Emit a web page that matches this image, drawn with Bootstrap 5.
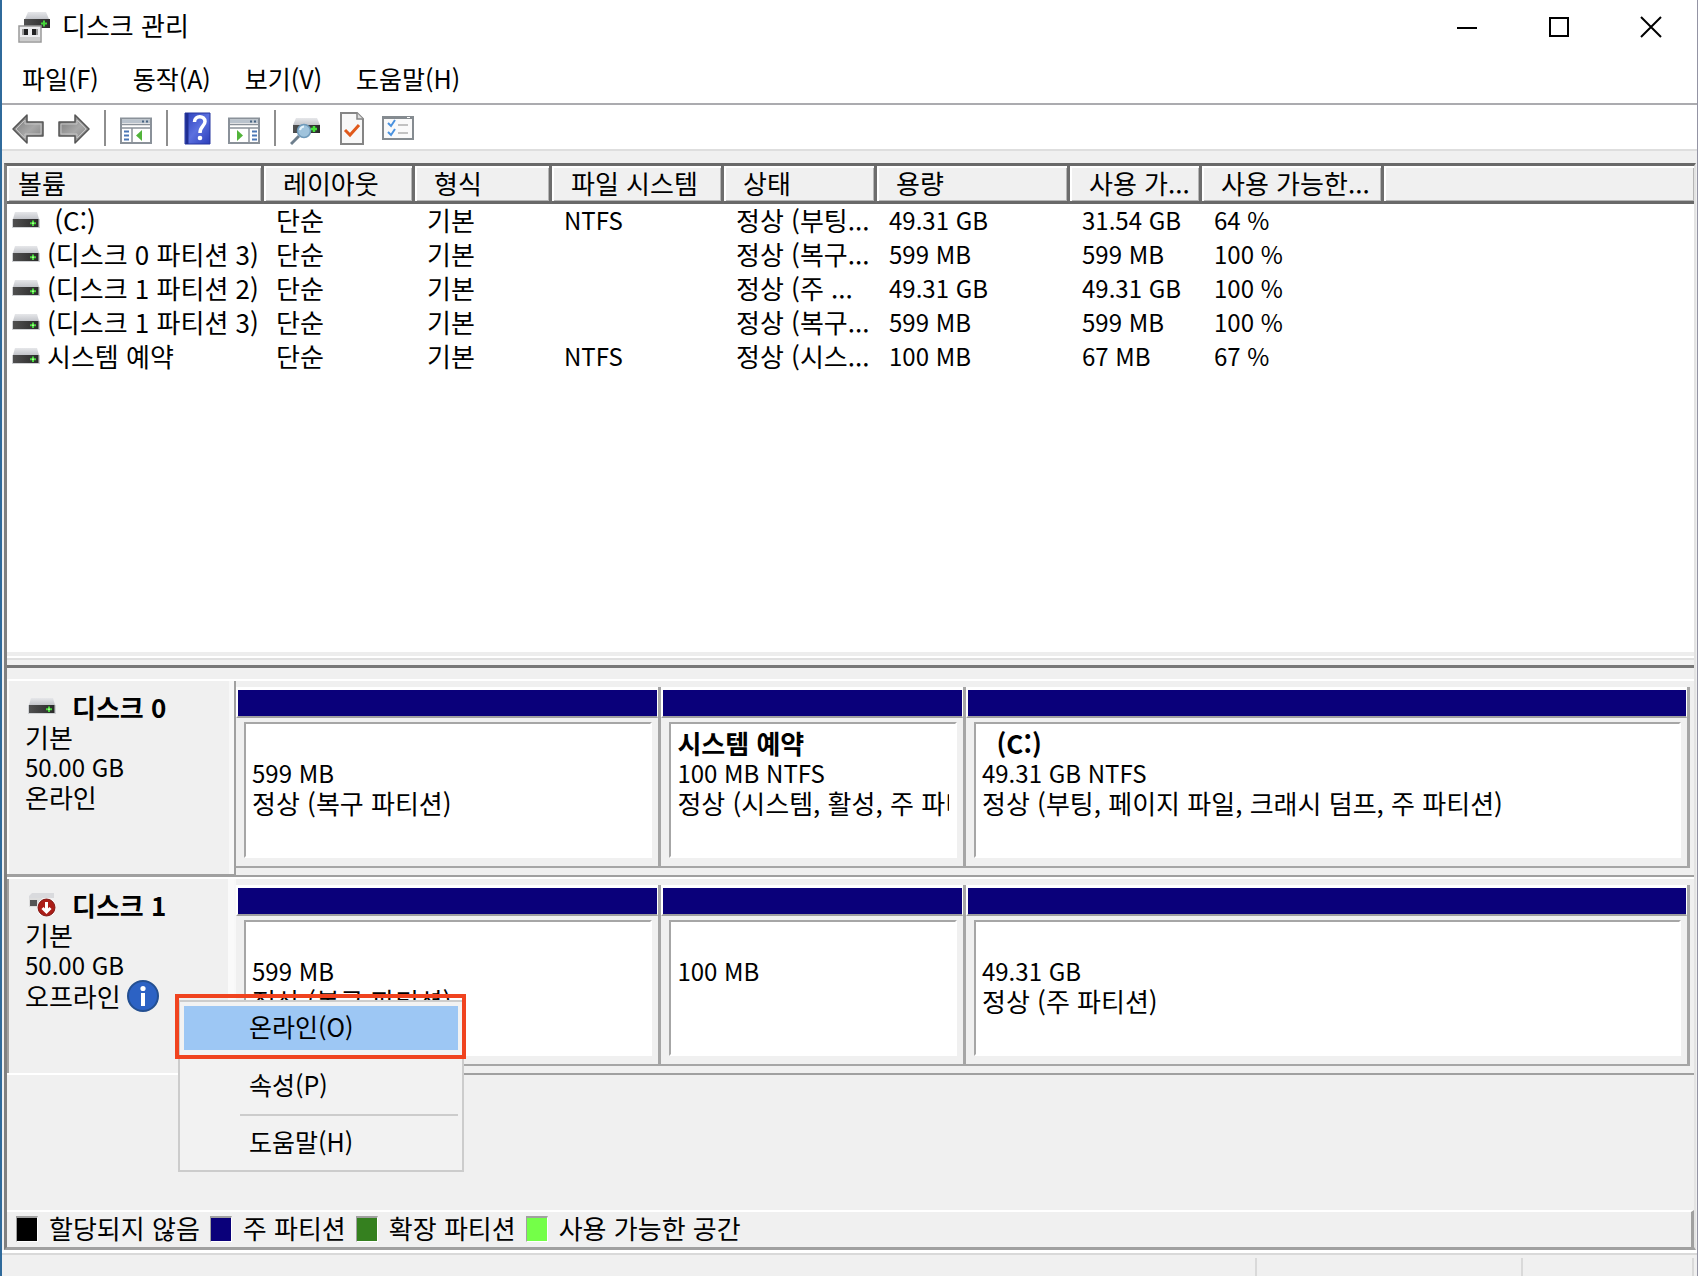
<!DOCTYPE html>
<html lang="ko">
<head>
<meta charset="utf-8">
<meta name="viewport" content="width=device-width, initial-scale=1">
<title>디스크 관리</title>
<link href="https://cdn.jsdelivr.net/npm/bootstrap@5.3.0/dist/css/bootstrap.min.css" rel="stylesheet">
<style>
body{font-family:"Noto Sans CJK KR",sans-serif;font-size:26px;line-height:30px;color:#000;background:#f0f0f0}
button{font-family:inherit;color:inherit}
.win{border-left:2px solid #2f6a9b;border-right:1px solid #9494a4}
.plain{border:0;background:transparent;padding:0;line-height:0}
.titlebar{height:53px}
.titlebar h1{font-size:26px;line-height:30px;font-weight:400;padding:0 0 4px 12px}
.winbtn{width:92px;height:53px}
.menubar{height:50px;gap:34px;padding-left:20px;border-bottom:2px solid #ababaf;box-sizing:content-box}
.menubar a{color:#000;font-size:25px;text-decoration:none}
.toolbar{height:44px;gap:14px;padding:2px 0 0 10px;border-bottom:2px solid #dedede}
.toolbar{box-sizing:border-box;height:46px}
.sep{width:2px;height:36px;background:#8e8e8e}
.frame{margin:12px 1px 0 2px;border:3px solid #808080;border-top-color:#696969;border-right:2px solid #e3e3e3;border-bottom-color:#a0a0a0}
.listpane{flex:491 1 0;background:#fff}
.vols{table-layout:fixed;width:100%;border-collapse:separate;border-spacing:0}
.vols th{height:38px;padding:0 0 2px 19px;font-weight:400;font-size:26px;background:#f0f0f0;border-right:3px solid #6d6d6d;border-bottom:3px solid #696969;box-shadow:inset 2px 2px #fff,inset -1px -1px #b5b5b5}
.vols th:first-child{padding-left:11px}
.vols th:last-child{border-right:0}
.vols td{height:34px;padding:0 0 2px 12px;line-height:32px}
.vols td:first-child{padding-left:5px}
.vols th,.vols td{white-space:nowrap}
.vols td svg{margin:0 7px 5px 0}
.fig{font-size:24px}
.c1{width:257px}.c2{width:151px}.c3{width:137px}.c4{width:172px}.c5{width:153px}.c6{width:193px}.c7{width:132px}.c8{width:182px}
.splitter{height:16px;background:#f0f0f0;border-top:4px solid #ededed;border-bottom:3px solid #777;box-shadow:inset 0 2px #fff,inset 0 4px #e0e0e0}
.graph{flex:537 1 0;padding-top:11px}
.disk{height:198px;border-top:2px solid #fff}
.disk-label{width:229px;padding:11px 6px 0 18px;border-right:2px solid #a0a0a0;border-bottom:3px solid #a0a0a0;box-shadow:inset -5px 0 #f8f8f8,inset 2px 0 #fbfbfb}
.disk-label strong{line-height:32px}
.disk-label.picked{border-right-color:#f8f8f8;border-bottom:2px solid #fff;box-shadow:inset 2px 0 #a0a0a0,inset -6px 0 #fafafa}
.name-row{padding-left:3px;gap:16px;height:30px}
.parts{display:grid;grid-template-columns:426fr 305fr 725fr;border-bottom:2px solid #a0a0a0;padding:6px 4px 7px 0}
.part{border-right:3px solid #a6a6a6;border-bottom:2px solid #a6a6a6;min-width:0}
.stripe{height:31px;background:#0a007a;border:solid #fff;border-width:3px 1px 0 2px;border-bottom:2px solid #a0a0a0}
.part-body{margin:4px 6px 6px 8px;padding:4px 6px 0 6px;height:136px;background:#fff;border:2px solid #fff;border-top-color:#a6a6a6;border-left-color:#a6a6a6}
.part-body div{height:30px;white-space:nowrap}
.part-body .clipped{overflow:hidden}
.ctx{left:171px;top:121px;width:286px;height:172px;background:#f2f2f2;border:2px solid #ccc;padding:4px;z-index:5}
.ctx .dropdown-item{font-size:25px;line-height:30px;padding:5px 0 9px 65px;color:#000}
.ctx .dropdown-item.hot{background:#9dc7f4}
.ctx .dropdown-item + .dropdown-item{margin-top:14px}
.ctx hr{margin:6px 0 5px 56px;border-top:2px solid #ccc;opacity:1}
.callout-box{left:168px;top:115px;width:291px;height:65px;border:4px solid #f0431f;z-index:6;pointer-events:none}
.legend-bar{height:37px;border-top:2px solid #fff;border-right:3px solid #a0a0a0;padding:0 0 3px 9px;gap:10px}
.swatch{width:22px;height:26px;border:1px solid #fff;border-top:2px solid #a0a0a0;border-left:1px solid #a0a0a0;margin:2px 11px 0 0}
.status{height:26px;border-top:3px solid #fff;box-shadow:inset 0 2px #d9d9d9;padding-top:5px}
.status div{border-right:2px solid #d9d9d9}
.s2{width:266px}.s3{width:171px;margin-right:3px}
</style>
</head>
<body>
<svg width="0" height="0" class="position-absolute" aria-hidden="true">
<defs>
<linearGradient id="top" x2="0" y2="1"><stop stop-color="#e6e7ea"/><stop offset="1" stop-color="#c3c5ca"/></linearGradient>
<linearGradient id="face" x2="1" y2="0"><stop stop-color="#505050"/><stop offset="1" stop-color="#2a2a2a"/></linearGradient>
<linearGradient id="arr" x2="1" y2="1"><stop stop-color="#747474"/><stop offset=".55" stop-color="#a8a8a8"/><stop offset="1" stop-color="#7c7c7c"/></linearGradient>
<linearGradient id="book" x2="1" y2="1"><stop stop-color="#2c3fbb"/><stop offset=".5" stop-color="#5b70df"/><stop offset="1" stop-color="#2c3fbb"/></linearGradient>
<symbol id="drive" viewBox="0 0 28 18"><path d="M3 0H25L27 7H1Z" fill="url(#top)"/><path d="M0 7H28V16H0Z" fill="#cfd1d4"/><path d="M1 7H26.500V15H1Z" fill="url(#face)"/><path d="M21 8.500V14M18 11.200H24" stroke="#45d63a" stroke-width="2"/><circle cx="21" cy="11.200" r="1" fill="#b9ff9e"/></symbol>
<symbol id="pane" viewBox="0 0 32 36"><path d="M1 8.500H31V33H1Z" fill="#fff" stroke="#8a9199" stroke-width="2"/><path d="M2 9.500H30V13H2Z" fill="#b9c2cc"/><path d="M2 14.500H30M2 18H30" stroke="#8a9199" stroke-width="1.500"/><path d="M22 11.500H24M26 11.500H28" stroke="#496482" stroke-width="2"/></symbol>
</defs>
</svg>
<div class="win min-vh-100 d-flex flex-column">
<header class="bg-white">
  <div class="titlebar d-flex align-items-center">
    <svg class="ms-3" width="32" height="32" viewBox="0 0 32 32" aria-hidden="true"><path d="M10 1H28L31 8H7Z" fill="url(#top)"/><path d="M6 8H32V17H6Z" fill="url(#face)"/><path d="M26 9.500V15.500M23 12.500H29" stroke="#45d63a" stroke-width="2"/><path d="M1 15H23V31H1Z" fill="#ececee" stroke="#999" stroke-width="1.500"/><path d="M2 26H22V30H2Z" fill="#ccc"/><path d="M4 18H10V24H4ZM14 18H20V24H14Z" fill="#222"/><path d="M4 18H6V24H4ZM18 18H20V24H18Z" fill="#999"/></svg>
    <h1 class="mb-0 flex-grow-1">디스크 관리</h1>
    <button class="plain winbtn" aria-label="최소화"><svg width="22" height="22" viewBox="0 0 22 22"><path d="M1 12H21" stroke="#000" stroke-width="2"/></svg></button>
    <button class="plain winbtn" aria-label="최대화"><svg width="22" height="22" viewBox="0 0 22 22"><path d="M2 2H20V20H2Z" fill="none" stroke="#000" stroke-width="2"/></svg></button>
    <button class="plain winbtn" aria-label="닫기"><svg width="22" height="22" viewBox="0 0 22 22"><path d="M1 1L21 21M21 1L1 21" stroke="#000" stroke-width="2"/></svg></button>
  </div>
  <nav class="menubar d-flex align-items-center"><a href="#">파일(F)</a><a href="#">동작(A)</a><a href="#">보기(V)</a><a href="#">도움말(H)</a></nav>
  <div class="toolbar d-flex align-items-center" role="toolbar" aria-label="도구">
    <button class="plain" aria-label="뒤로"><svg width="32" height="36" viewBox="0 0 32 36"><path d="M1 19L15 5V12H31V26H15V33Z" fill="url(#arr)" stroke="#555" stroke-width="1.500" stroke-linejoin="round"/><path d="M4 19L13 10V14H29V24H13V28Z" fill="none" stroke="#c4c4c4"/></svg></button>
    <button class="plain" aria-label="앞으로"><svg width="32" height="36" viewBox="0 0 32 36"><path d="M31 19L17 5V12H1V26H17V33Z" fill="url(#arr)" stroke="#555" stroke-width="1.500" stroke-linejoin="round"/><path d="M28 19L19 10V14H3V24H19V28Z" fill="none" stroke="#c4c4c4"/></svg></button>
    <span class="sep"></span>
    <button class="plain" aria-label="콘솔 트리"><svg width="32" height="36"><use href="#pane"/><path d="M12 18V32" stroke="#8a9199" stroke-width="1.500"/><path d="M4 21.500H9M4 25.500H9M4 29.500H9" stroke="#4a76b5" stroke-width="2"/><path d="M22 20V31L16 25.500Z" fill="#52b43a"/></svg></button>
    <span class="sep"></span>
    <button class="plain" aria-label="도움말"><svg width="32" height="36" viewBox="0 0 32 36"><path d="M3 3H28V34H3Z" fill="url(#book)" stroke="#2636a0"/><path d="M5 3V34" stroke="#1f2e93" stroke-width="3"/><path d="M12.500 12C12.500 5 23 5 23 11.500C23 16 18 16 18 23" fill="none" stroke="#fff" stroke-width="3.500"/><circle cx="18" cy="28" r="2.300" fill="#fff"/></svg></button>
    <button class="plain" aria-label="작업 창"><svg width="32" height="36"><use href="#pane"/><path d="M21 18V32" stroke="#8a9199" stroke-width="1.500"/><path d="M24 21.500H29M24 25.500H29M24 29.500H29" stroke="#4a76b5" stroke-width="2"/><path d="M9 20V31L15 25.500Z" fill="#52b43a"/></svg></button>
    <span class="sep"></span>
    <button class="plain" aria-label="다시 검사"><svg width="32" height="36" viewBox="0 0 32 36"><path d="M6 8H27L30 15H3Z" fill="url(#top)"/><path d="M3 15H30V23H3Z" fill="url(#face)"/><path d="M24 16V22M21 19H27" stroke="#45e33a" stroke-width="2.500"/><path d="M9 26L1 34" stroke="#6e7f8d" stroke-width="3"/><circle cx="14" cy="21" r="6.500" fill="#9fc3dc" stroke="#6f9aba" stroke-width="1.500"/><path d="M10 20A4.500 4.500 0 0 1 14 16.500" fill="none" stroke="#e5f3fb" stroke-width="2"/></svg></button>
    <button class="plain" aria-label="속성"><svg width="32" height="36" viewBox="0 0 32 36"><path d="M5 3H21L27 9V34H5Z" fill="#f8f8f8" stroke="#858585" stroke-width="2"/><path d="M21 3V9H27" fill="#ddd" stroke="#858585" stroke-width="1.500"/><path d="M9 20L14 25L23 15" fill="none" stroke="#e0591b" stroke-width="3"/></svg></button>
    <button class="plain" aria-label="목록"><svg width="32" height="36" viewBox="0 0 32 36"><path d="M1 7H31V29H1Z" fill="#fafafa" stroke="#858b90" stroke-width="2"/><path d="M1 7.500H31" stroke="#858b90" stroke-width="3"/><path d="M25 7.500H28" stroke="#fff"/><path d="M6 13L9 16L13 10M6 22L9 25L13 19" fill="none" stroke="#4a92df" stroke-width="2"/><path d="M16 15H26M16 23H26" stroke="#c2c2c2" stroke-width="2"/></svg></button>
  </div>
</header>
<main class="frame flex-grow-1 d-flex flex-column">
  <section class="listpane">
    <table class="vols">
      <colgroup><col class="c1"><col class="c2"><col class="c3"><col class="c4"><col class="c5"><col class="c6"><col class="c7"><col class="c8"><col></colgroup>
      <thead><tr><th>볼륨</th><th>레이아웃</th><th>형식</th><th>파일 시스템</th><th>상태</th><th>용량</th><th>사용 가...</th><th>사용 가능한...</th><th></th></tr></thead>
      <tbody>
      <tr><td><svg width="28" height="18" aria-hidden="true"><use href="#drive"/></svg>&nbsp;(C:)</td><td>단순</td><td>기본</td><td class="fig">NTFS</td><td>정상 (부팅...</td><td class="fig">49.31 GB</td><td class="fig">31.54 GB</td><td class="fig">64 %</td><td></td></tr>
      <tr><td><svg width="28" height="18" aria-hidden="true"><use href="#drive"/></svg>(디스크 0 파티션 3)</td><td>단순</td><td>기본</td><td></td><td>정상 (복구...</td><td class="fig">599 MB</td><td class="fig">599 MB</td><td class="fig">100 %</td><td></td></tr>
      <tr><td><svg width="28" height="18" aria-hidden="true"><use href="#drive"/></svg>(디스크 1 파티션 2)</td><td>단순</td><td>기본</td><td></td><td>정상 (주 ...</td><td class="fig">49.31 GB</td><td class="fig">49.31 GB</td><td class="fig">100 %</td><td></td></tr>
      <tr><td><svg width="28" height="18" aria-hidden="true"><use href="#drive"/></svg>(디스크 1 파티션 3)</td><td>단순</td><td>기본</td><td></td><td>정상 (복구...</td><td class="fig">599 MB</td><td class="fig">599 MB</td><td class="fig">100 %</td><td></td></tr>
      <tr><td><svg width="28" height="18" aria-hidden="true"><use href="#drive"/></svg>시스템 예약</td><td>단순</td><td>기본</td><td class="fig">NTFS</td><td>정상 (시스...</td><td class="fig">100 MB</td><td class="fig">67 MB</td><td class="fig">67 %</td><td></td></tr>
      </tbody>
    </table>
  </section>
  <div class="splitter"></div>
  <section class="graph">
    <div class="disk d-flex">
      <div class="disk-label flex-shrink-0">
        <div class="name-row d-flex align-items-center"><svg width="28" height="18" aria-hidden="true"><use href="#drive"/></svg><strong>디스크 0</strong></div>
        <div>기본</div><div class="fig">50.00 GB</div><div>온라인</div>
      </div>
      <div class="parts flex-grow-1">
        <div class="part"><div class="stripe"></div><div class="part-body"><div></div><div class="fig">599 MB</div><div>정상 (복구 파티션)</div></div></div>
        <div class="part"><div class="stripe"></div><div class="part-body"><div class="fw-bold">시스템 예약</div><div class="fig">100 MB NTFS</div><div class="clipped">정상 (시스템, 활성, 주 파티션)</div></div></div>
        <div class="part"><div class="stripe"></div><div class="part-body"><div class="fw-bold">&nbsp; (C:)</div><div class="fig">49.31 GB NTFS</div><div>정상 (부팅, 페이지 파일, 크래시 덤프, 주 파티션)</div></div></div>
      </div>
    </div>
    <div class="disk d-flex position-relative">
      <div class="disk-label picked flex-shrink-0">
        <div class="name-row d-flex align-items-center"><svg width="28" height="26" viewBox="0 0 28 26" aria-hidden="true"><path d="M4 1H26V6H1V4Z" fill="#d9dadd"/><path d="M1 6H14V15H1Z" fill="#ddd"/><path d="M2 8H9V14H2Z" fill="#555"/><circle cx="18.500" cy="15.500" r="9.500" fill="#fff"/><circle cx="18.500" cy="15.500" r="8.500" fill="#ab1d17" stroke="#7c1612"/><path d="M18.500 10V19M14.500 16L18.500 20L22.500 16" fill="none" stroke="#fff" stroke-width="3"/></svg><strong>디스크 1</strong></div>
        <div>기본</div><div class="fig">50.00 GB</div>
        <div class="d-flex align-items-center">오프라인<svg class="ms-1 flex-shrink-0" width="34" height="32" viewBox="0 0 34 32" aria-hidden="true"><circle cx="18" cy="16" r="15" fill="#2c62c4" stroke="#234f91" stroke-width="2"/><circle cx="18" cy="8.500" r="2.600" fill="#fff"/><path d="M18 13V26" stroke="#fff" stroke-width="4"/></svg></div>
      </div>
      <div class="parts flex-grow-1">
        <div class="part"><div class="stripe"></div><div class="part-body"><div></div><div class="fig">599 MB</div><div>정상 (복구 파티션)</div></div></div>
        <div class="part"><div class="stripe"></div><div class="part-body"><div></div><div class="fig">100 MB</div></div></div>
        <div class="part"><div class="stripe"></div><div class="part-body"><div></div><div class="fig">49.31 GB</div><div>정상 (주 파티션)</div></div></div>
      </div>
      <div class="ctx position-absolute" role="menu">
        <button class="dropdown-item hot" role="menuitem">온라인(O)</button>
        <button class="dropdown-item" role="menuitem">속성(P)</button>
        <hr>
        <button class="dropdown-item" role="menuitem">도움말(H)</button>
      </div>
      <div class="callout-box position-absolute"></div>
    </div>
  </section>
  <footer class="legend-bar d-flex align-items-center">
    <span class="d-flex align-items-center"><i class="swatch" style="background:#000"></i>할당되지 않음</span>
    <span class="d-flex align-items-center"><i class="swatch" style="background:#0a007a"></i>주 파티션</span>
    <span class="d-flex align-items-center"><i class="swatch" style="background:#35801f"></i>확장 파티션</span>
    <span class="d-flex align-items-center"><i class="swatch" style="background:#74ff48"></i>사용 가능한 공간</span>
  </footer>
</main>
<div class="status d-flex"><div class="flex-grow-1"></div><div class="s2"></div><div class="s3"></div></div>
</div>
<script src="https://cdn.jsdelivr.net/npm/bootstrap@5.3.0/dist/js/bootstrap.bundle.min.js"></script>
</body>
</html>
